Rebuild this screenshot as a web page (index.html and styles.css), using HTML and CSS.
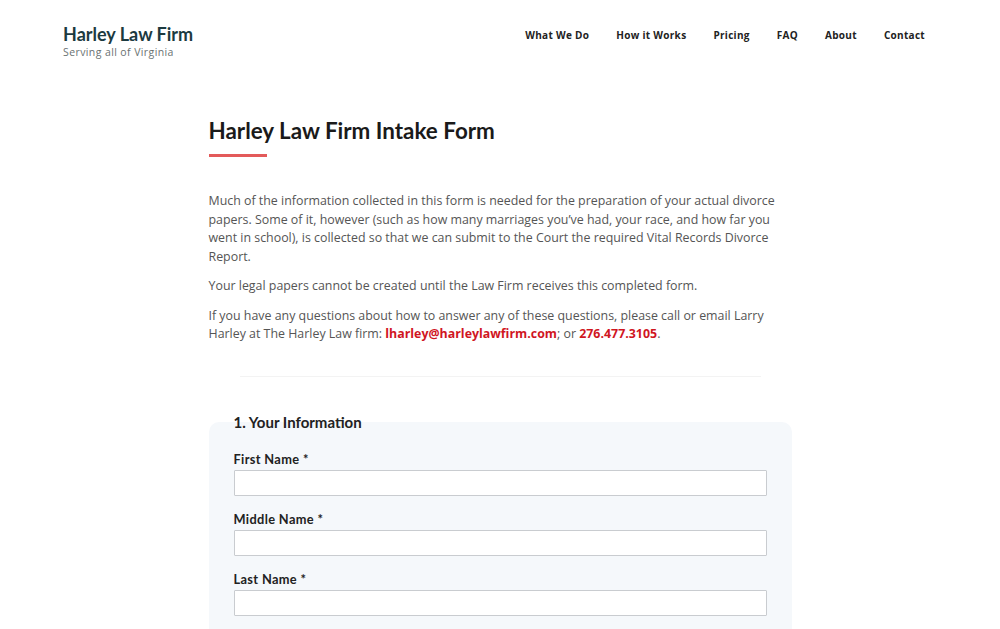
FILE: index.html
```html
<!DOCTYPE html>
<html lang="en">
<head>
<meta charset="utf-8">
<title>Harley Law Firm Intake Form</title>
<link rel="stylesheet" href="styles.css">
</head>
<body>
<header class="site-header">
  <div class="brand">
    <div class="brand-name">Harley Law Firm</div>
    <div class="brand-tag">Serving all of Virginia</div>
  </div>
  <nav class="nav">
    <a href="#">What We Do</a>
    <a href="#">How it Works</a>
    <a href="#">Pricing</a>
    <a href="#">FAQ</a>
    <a href="#">About</a>
    <a href="#">Contact</a>
  </nav>
</header>
<main class="content">
  <h1 class="title">Harley Law Firm Intake Form</h1>
  <div class="title-bar"></div>
  <p class="text">Much of the information collected in this form is needed for the preparation of your actual divorce papers. Some of it, however (such as how many marriages you’ve had, your race, and how far you went in school), is collected so that we can submit to the Court the required Vital Records Divorce Report.</p>
  <p class="text">Your legal papers cannot be created until the Law Firm receives this completed form.</p>
  <p class="text">If you have any questions about how to answer any of these questions, please call or email Larry Harley at The Harley Law firm: <a class="red" href="#">lharley@harleylawfirm.com</a>; or <a class="red" href="#">276.477.3105</a>.</p>
  <hr class="sep">
  <fieldset class="form-box">
    <legend class="legend">1. Your Information</legend>
    <div class="field">
      <label class="label">First Name *</label>
      <input class="input" type="text">
    </div>
    <div class="field">
      <label class="label">Middle Name *</label>
      <input class="input" type="text">
    </div>
    <div class="field">
      <label class="label">Last Name *</label>
      <input class="input" type="text">
    </div>
  </fieldset>
</main>
</body>
</html>
```
FILE: styles.css
```css
* { box-sizing: border-box; }
html, body { margin: 0; padding: 0; background: #fff; }
body { font-family: "Open Sans", "Liberation Sans", sans-serif; color: #555; }

.site-header {
  display: flex;
  justify-content: space-between;
  align-items: flex-start;
  padding: 24px 75px 0 63px;
  height: 90px;
}
.brand-name {
  font-family: Lato, sans-serif;
  font-weight: 700;
  font-size: 18px;
  line-height: 20px;
  color: #1c3a3f;
}
.brand-tag {
  margin-top: 1px;
  font-size: 10.5px;
  line-height: 14px;
  color: #6a7272;
  letter-spacing: 0.4px;
}
.nav {
  display: flex;
  gap: 27px;
  padding-top: 4px;
}
.nav a {
  font-size: 10px;
  font-weight: 700;
  color: #222;
  text-decoration: none;
  letter-spacing: 0.3px;
  line-height: 14px;
}

.content {
  width: 583px;
  margin: 0 auto;
  padding-top: 28px;
}
.title {
  margin: 0;
  font-family: Lato, sans-serif;
  font-weight: 700;
  font-size: 22.4px;
  line-height: 26px;
  color: #1a1a1a;
}
.title-bar {
  width: 58px;
  height: 3px;
  background: #e35a5a;
  margin-top: 10px;
  margin-bottom: 35px;
}
.text {
  margin: 0 0 11px;
  font-size: 12.4px;
  line-height: 18.5px;
  color: #555;
}
.red { color: #d0161f; font-weight: 700; text-decoration: none; }

.sep {
  border: 0;
  height: 1px;
  background: #f3f3f3;
  margin: 32px 31px 0;
}
.form-box {
  margin: 36px 0 0;
  padding: 20px 25px 20px;
  border: 0;
  border-radius: 10px;
  background: #f5f8fb;
}
.legend {
  padding: 0;
  font-family: Lato, sans-serif;
  font-weight: 700;
  font-size: 15px;
  color: #222;
}
.field { margin-bottom: 15px; }
.label {
  display: block;
  font-family: Lato, sans-serif;
  font-weight: 700;
  font-size: 12.8px;
  letter-spacing: 0.35px;
  line-height: 16px;
  color: #222;
  margin-bottom: 3px;
}
.input {
  display: block;
  width: 100%;
  height: 26px;
  border: 1px solid #c9ccd0;
  background: #fff;
  border-radius: 1px;
}
```
